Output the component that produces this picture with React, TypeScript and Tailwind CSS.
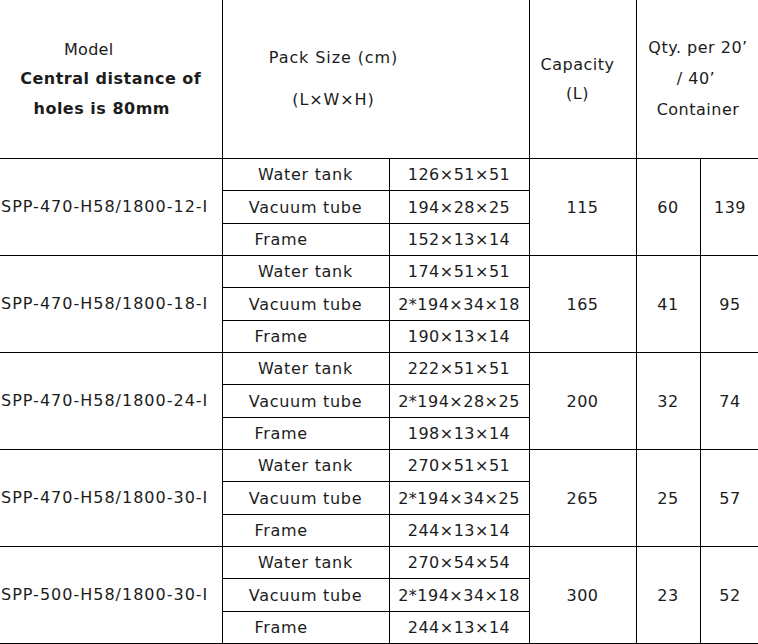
import React from "react";

type Group = {
  model: string;
  sizes: [string, string, string];
  cap: string;
  q20: string;
  q40: string;
};

const groups: Group[] = [
  { model: "SPP-470-H58/1800-12-I", sizes: ["126×51×51", "194×28×25", "152×13×14"], cap: "115", q20: "60", q40: "139" },
  { model: "SPP-470-H58/1800-18-I", sizes: ["174×51×51", "2*194×34×18", "190×13×14"], cap: "165", q20: "41", q40: "95" },
  { model: "SPP-470-H58/1800-24-I", sizes: ["222×51×51", "2*194×28×25", "198×13×14"], cap: "200", q20: "32", q40: "74" },
  { model: "SPP-470-H58/1800-30-I", sizes: ["270×51×51", "2*194×34×25", "244×13×14"], cap: "265", q20: "25", q40: "57" },
  { model: "SPP-500-H58/1800-30-I", sizes: ["270×54×54", "2*194×34×18", "244×13×14"], cap: "300", q20: "23", q40: "52" },
];

const labels = ["Water tank", "Vacuum tube", "Frame"];
const heights = ["h-[32px]", "h-[33px]", "h-[32px]"];

export default function App() {
  return (
    <div className="w-[758px] h-[644px] overflow-hidden bg-white text-[#1c1c1c] font-['DejaVu_Sans',Verdana,sans-serif] text-[16px] tracking-[0.5px]">
      <table className="table-fixed border-collapse w-[760px]">
        <colgroup>
          <col className="w-[222px]" />
          <col className="w-[167px]" />
          <col className="w-[140px]" />
          <col className="w-[107px]" />
          <col className="w-[64px]" />
          <col className="w-[60px]" />
        </colgroup>
        <thead>
          <tr className="h-[158px]">
            <th className="border-r border-b border-black font-normal align-middle p-0">
              <div className="leading-[29.5px] text-center">
                <div className="pr-[44px] tracking-[0.3px]">Model</div>
                <div className="font-bold">Central distance of</div>
                <div className="font-bold pr-[18px]">holes is 80mm</div>
              </div>
            </th>
            <th colSpan={2} className="border border-t-0 border-black font-normal align-middle p-0">
              <div className="flex flex-col items-center gap-[19px] leading-[23px] pr-[84px] tracking-[0.9px]">
                <div>Pack Size (cm)</div>
                <div>(L×W×H)</div>
              </div>
            </th>
            <th className="border border-t-0 border-black font-normal align-middle p-0">
              <div className="leading-[29px] text-center pr-[10px]">
                <div>Capacity</div>
                <div>(L)</div>
              </div>
            </th>
            <th colSpan={2} className="border border-t-0 border-black font-normal align-middle p-0">
              <div className="leading-[31px] text-center">
                <div>Qty. per 20’</div>
                <div className="pr-[4px]">/ 40’</div>
                <div>Container</div>
              </div>
            </th>
          </tr>
        </thead>
        <tbody>
          {groups.map((g, gi) =>
            [0, 1, 2].map((ri) => (
              <tr key={`${gi}-${ri}`} className={heights[ri]}>
                {ri === 0 && (
                  <td rowSpan={3} className="border-r border-b border-black p-0 pl-[1px] align-middle text-left tracking-[1px]">
                    {g.model}
                  </td>
                )}
                <td className={`border border-black p-0 pt-[2px] align-middle tracking-[0.7px] ${ri === 2 ? "text-left pl-[32px]" : "text-center"}`}>
                  {labels[ri]}
                </td>
                <td className="border border-black p-0 pt-[2px] align-middle text-center">{g.sizes[ri]}</td>
                {ri === 0 && (
                  <>
                    <td rowSpan={3} className="border border-black p-0 pt-[2px] align-middle text-center">{g.cap}</td>
                    <td rowSpan={3} className="border border-black p-0 pt-[2px] align-middle text-center">{g.q20}</td>
                    <td rowSpan={3} className="border border-black p-0 pt-[2px] align-middle text-center">{g.q40}</td>
                  </>
                )}
              </tr>
            ))
          )}
        </tbody>
      </table>
    </div>
  );
}
